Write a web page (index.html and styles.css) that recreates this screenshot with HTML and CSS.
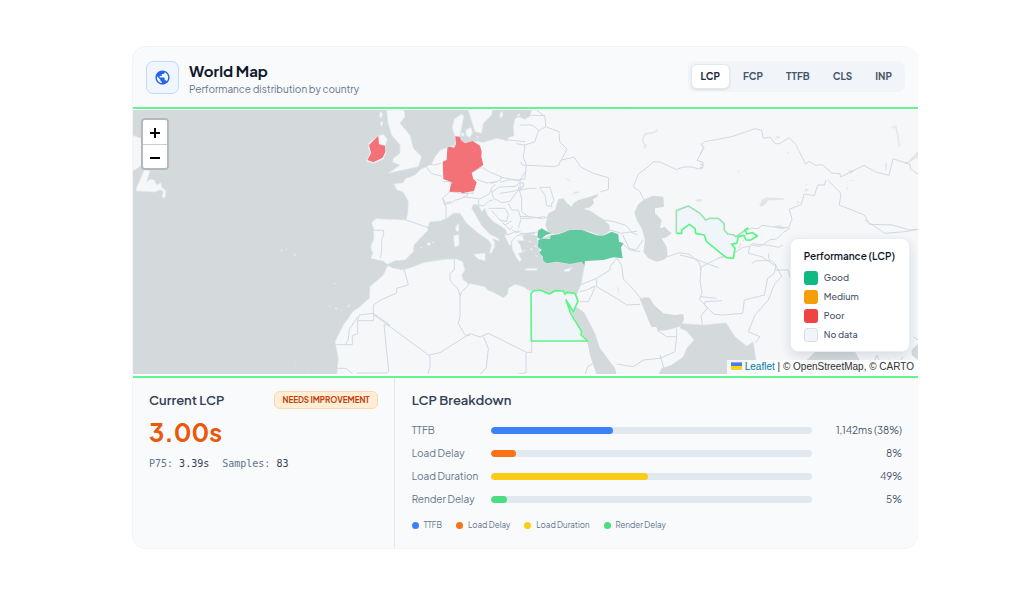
FILE: index.html
```html
<!DOCTYPE html>
<html lang="en">
<head>
<meta charset="utf-8">
<meta name="viewport" content="width=device-width, initial-scale=1">
<title>World Map</title>
<link rel="stylesheet" href="styles.css">
</head>
<body>
<main class="card">
  <header class="head">
    <span class="head-icon">
      <svg viewBox="0 0 24 24" width="17" height="17" aria-hidden="true"><path fill="#2563eb" d="M12 2C6.48 2 2 6.48 2 12s4.480 10 10 10 10-4.480 10-10S17.520 2 12 2zm-1 17.930c-3.950-.49-7-3.850-7-7.930 0-.62.080-1.210.21-1.790L9 15v1c0 1.100.9 2 2 2v1.930zm6.900-2.540c-.26-.81-1-1.390-1.900-1.390h-1v-3c0-.55-.45-1-1-1H8v-2h2c.55 0 1-.45 1-1V7h2c1.100 0 2-.9 2-2v-.41c2.930 1.190 5 4.060 5 7.410 0 2.080-.8 3.970-2.100 5.390z"/></svg>
    </span>
    <div class="head-text">
      <h1>World Map</h1>
      <p>Performance distribution by country</p>
    </div>
    <nav class="tabs" aria-label="Metric">
      <button type="button" class="tab active">LCP</button>
      <button type="button" class="tab">FCP</button>
      <button type="button" class="tab">TTFB</button>
      <button type="button" class="tab">CLS</button>
      <button type="button" class="tab">INP</button>
    </nav>
  </header>

  <section class="map">
    <svg class="map-canvas" viewBox="399 330 2355 792" preserveAspectRatio="xMidYMid slice" role="img" aria-label="Map of countries by LCP">
      <g class="land">
        <path d="M1595 330L1588 350 1575 358 1562 353 1558 340 1545 355 1540 380 1542 407 1525 413 1523 423 1490 415 1450 427 1420 423 1395 430 1383 421 1380 405 1384 388 1388 365 1392 350 1385 342 1362 358 1357 385 1366 412 1366 435 1342 443 1322 449 1305 470 1295 492 1278 501 1263 507 1245 525 1215 537 1210 548 1182 552 1190 569 1210 577 1225 604 1223 640 1218 660 1170 658 1128 656 1115 667 1120 685 1122 715 1112 740 1118 760 1112 775 1135 780 1150 783 1162 793 1185 782 1215 780 1240 755 1242 735 1265 710 1285 690 1282 683 1290 665 1320 663 1340 655 1360 640 1380 640 1400 670 1435 700 1465 720 1475 735 1468 760 1475 758 1484 740 1484 727 1478 715 1498 724 1495 715 1470 703 1445 677 1430 650 1415 625 1420 613 1435 615 1445 635 1455 625 1462 645 1480 665 1505 680 1518 690 1515 710 1528 735 1535 735 1538 750 1548 770 1558 785 1565 780 1555 760 1568 757 1560 735 1552 722 1572 722 1568 708 1585 700 1612 708 1612 720 1617 740 1620 760 1628 775 1640 790 1670 785 1710 792 1750 783 1755 795 1748 825 1745 845 1738 865 1730 885 1725 878 1690 880 1665 872 1648 882 1615 870 1595 873 1585 870 1570 860 1545 853 1525 865 1523 883 1510 893 1480 877 1462 870 1455 860 1405 850 1390 840 1385 825 1395 810 1388 785 1370 777 1335 778 1275 787 1235 802 1210 810 1180 805 1163 797 1150 825 1110 860 1108 895 1080 920 1058 935 1045 955 1030 975 1005 1025 1015 1075 1010 1125H1975L1985 1105 2015 1095 2050 1070 2060 1045 2082 1020 2060 993 2040 985 2040 970 2110 975 2178 968 2205 1010 2240 1038 2260 1025 2268 1080 2275 1125H2760V325z"/>
        <path d="M1160 330H1212L1215 350 1200 370 1230 405 1240 445 1265 470 1255 500 1210 510 1165 520 1200 495 1178 487 1180 475 1200 460 1200 435 1175 405 1165 375z"/>
        <path d="M1135 407L1150 403 1162 418 1155 440 1158 455 1150 478 1120 490 1098 484 1110 460 1105 440 1107 428z"/>
        <path d="M1403 325L1425 395 1445 400 1450 370 1475 345 1478 325z"/>
        <path d="M1398 390L1412 382 1418 397 1410 413 1398 405zM1384 398l8 2 0 9-9-2zM1500 338l8-4 1 15-9 6zM1430 408l6 3-5 4z"/>
        <path d="M1370 675L1376 673 1377 690 1372 696 1366 687zM1360 708L1376 703 1378 735 1364 742z"/>
        <path d="M1420 763L1456 759 1455 783 1435 777zM1577 805h35l-2 6h-32zM1692 810l24-8-8 12-14 1z"/>
        <path d="M1260 741l6 0-1 5zM1280 731l10-4 2 6-7 4zM1297 725l5 1-2 4zM1140 335l8 5-4 16-5-6zM1143 365l6 0-3 14-6-7z"/>
        <path d="M841 751l5-1 1 2-5 1zM857 747l3 0 1 2-4 0zM880 763l6 0 2 3-6 0zM1001 850l5 0 0 2-5 0zM990 916l3 3-1 2zM1006 923l6 2-4 4zM1021 929l3 1-2 3zM1042 920l10-10-6 12zM886 1096l4 1-3 1zM920 1110l3 0-1 2z"/>
        <path d="M395 405L425 415 445 430 450 470 420 500 395 515z"/>
        <path d="M433 510L410 562 408 573 465 576 480 569 490 575 485 590 495 595 498 572 485 562 483 548 470 555 463 540 452 537 440 545 450 512z"/>
        <path d="M1585 722l8 2-2 5zM1590 745l8 3-4 4zM1602 738l6-2 2 6zM1570 748l7 6-5 0zM1607 765l4 2-3 4z"/>
      </g>
      <g class="water">
        <path d="M1636 675L1645 640 1665 630 1675 598 1690 595 1700 608 1715 620 1720 610 1735 600 1760 593 1795 582 1792 590 1778 598 1782 610 1770 622 1750 627 1770 632 1805 655 1828 675 1830 692 1810 707 1790 703 1770 695 1725 690 1700 693 1670 702 1645 700z"/>
        <path d="M1622 716l28-10 3 8-28 6z"/>
        <path d="M1903 637L1915 612 1935 597 1960 587 1990 590 1992 620 1965 625 1965 640 1985 660 1980 685 1995 680 2003 690 2015 700 2000 712 1985 715 2000 740 2003 770 1990 780 1970 785 1945 775 1930 755 1935 720 1925 685 1910 660z"/>
        <path d="M1735 925L1752 937 1785 1000 1800 1045 1845 1105 1850 1125H1790L1770 1065 1763 1030 1745 1000 1725 955 1712 935 1700 905z"/>
        <path d="M1920 898L1932 892 1948 893 1962 915 1990 940 2025 945 2050 942 2052 960 2038 980 2000 991 1975 992 1968 980 1955 982 1945 960z"/>
        <path d="M2415 1085L2445 1055H2565L2585 1090 2600 1125H2405zM2760 1025L2735 1050 2735 1065 2760 1085z"/>
      </g>
      <g class="lake">
        <path d="M2278 615L2285 600 2300 592 2355 595 2350 600 2305 601 2292 617 2282 620z"/>
        <path d="M2705 487L2725 485 2740 468 2758 450V470L2740 480 2720 492z"/>
        <path d="M2655 490l6 0-1 20-4 0zM2542 510l20 2-8 10zM2540 562l6 2-6 6zM2550 543l12-3 0 3zM2390 602l8 4-4 8zM2325 411l15-3-4 9zM2322 415l7-1 0 2zM2360 453l6 4-3 6zM2212 514l8-4-5 8zM2412 570l18-5-12 10zM2415 555l12-3-12 6z"/>
        <path d="M2315 679l25-4 20 10-15 3z"/>
        <path d="M1692 535l14 3 6 8zM1715 584l12-10 14 3zM2083 600l20-3 5 4-12 5zM1850 855l6 12 2 20-4-14z"/>
      </g>
      <g class="lake-line">
        <path d="M2675 383l12-4 6 24 5 38M1972 390l-12 8-25 4-8 20 10 15-6 8"/>
      </g>
      <g class="borders">
        <!-- Western and central Europe -->
        <path d="M1218 660L1285 683M1116 688l10 3h25l0 12-6 15 0 35-4 20M1278 501l18 20 30 8M1280 490l20 5 22-5M1330 545l20 0 2 28-22 20 2 20 22-4 10-8 16-4 22-10 0-18M1330 600l8 20 0 35M1352 575l40 6 30-2M1325 595l15 14 14-6M1422 547l10-8 28 10 30-4 0 0M1415 518l30-16 20 12 40 17-5 10-28 10M1390 590l48 7 30-15 8-20 10-8M1500 531l52 10 22-4 4-25 0-20-8-20 4-28 0-10M1525 420l50 5M1500 547l28-8 30 2M1478 575l20-14 50-2 10-12 14 3-4 14-28 10-40 6M1475 570l5 24 25 14 25-4 14-20 22-25M1436 600l0 15 15 3 14-14 15-5M1465 625l50 0 10 18-5 22-20-5-25-28M1525 610l10 20 20 0 8 28-8 25M1565 655l25 0 45-5M1505 665l10 10 20-12M1516 675l14 15 8-12M1536 690l14 8 12-6M1516 690l4 15 15-5 20-8M1535 735l0-12 16-16 34-5 20-2M1555 560l10 35 0 40 24 18"/>
        <!-- Eastern Europe -->
        <path d="M1560 375l36 0 20 16-12 35-30 9-25-4M1610 330l25 20 2 30-20 12M1637 380l40 15 2 30 22 22-15 30 5 2M1560 485l8 10 95 5 14-5 5-14 40-10 20 30 40 20 44 12-1 35-24 8M1578 512l-18 28 0 30 30-5 20 0M1620 565l15 20 5 32 15 3 0-10M1618 562l32 0 12 40-8 10M1560 650l30-1 40 8M1530 360l40-15 65 2"/>
        <path d="M1632 655l12-5M1558 700l24 0 30-4"/>
        <!-- Russia, Kazakhstan and Mongolia -->
        <path d="M1932 600l-12-25-20-15 15-38 30-22 16-15 20 1 48 23 20-8 30 0 15 6 15-8 0-12-18-6 12-20 8-18-5-10 8-8 45-8 40-8 66-23 20 5 5 24 20-4 15 20 14 0 28-18 20 20 30 60 10-9 20 12 20-2 28 25 25 2 2 10 70-35 35 20 40 10 12-50 52 18 0 12 20 15 40-3 20 5"/>
        <path d="M2478 540l-5 15-20 0-10 32-30-5-10 32-35 14 8 30-10 25-32 0-48-7-12 10-20-2-15 10M2483 540l40 40-5 35 75 30 15 28 70 2 50 15 30-3M2370 685l-20 12-20 20-20 2-30 20-25-4"/>
        <path d="M2100 430l12 12-12 20M2100 492l8 3 0 10-8 2"/>
        <!-- Caucasus and Iran -->
        <path d="M1808 660l30 4 40 12 18 20 15-2M1830 690l35 10 25-4 20 8M1868 705l20 40 20 5 22-30 0 0M1865 730l25 20 30 5M2003 770l35-12 30 5 30 25 5 20-3 35 6 35-8 20 25 25-20 25 4 25M2040 765l40 10 75 28M2115 905l50-3M2100 785l0 0M2155 775l25-5"/>
        <path d="M1740 855l50-20 40-25 0-10 20-24M1790 838l0 22 60 35 30 20 40-2M1850 772l15 25 5 40 20 20 30 35 5 12M1740 875l20-5 25-12M1740 905l25 0 10-20 10-25M1735 840l-8 40"/>
        <path d="M1970 990l30 20 30 0 0-25M2030 1010l-5 45-45 20-50 5-30 20-50-8M1980 1065l12 40M1755 1125l8-25 25-15"/>
        <!-- Central and south Asia -->
        <path d="M2100 810l5-10 60-30 20 0 20-12 22-15 20-4 10-8 50 5 28 6 14-7M2115 905l-2 10 30 28 25 2 60-5 5-40 60-15 10-50 20-15 5-25-22-20 0-15M2250 735l-5 25 40 10 45 30 15 30-20 20-20 50-40 45-20 50 35 15-14 18M2325 810l40 0 10 40 0 20 50 50 40 25M2150 895l-50-5M2215 745l10-15M2215 715l15-5 0 14"/>
        <path d="M2595 660l60 40 60-5 45-8M2620 1095l10-30 14 30 22-15 25 15 18-24M2740 1010l20 14M2310 782l-40 0-15 8"/>
        <!-- North Africa -->
        <path d="M1213 810l12 45-35 10 0 14-50 22-20 14 0 28 160 118 10 8 0 30-8 30-10 6-20 4M1120 940l-42 5-5 17 48 0 0-18M1073 962l0 40-16 4 0 28-52 0M1073 950l-25 38-3 30-8 15M1120 940l50 35-18 0 14 138-6 6-90 0M1288 1065l32-7 90-57 30 10 25-11 115 57 15 0V1015M1363 780l0 30-13 10 0 20 25 30 5 20 0 60-5 20 20 35 15 2 0 0M1380 890l5-15 20-18 0-10M1450 1010l15 35-6 58-20 22M1578 1058l0 60-25 5M1010 1105l28 0 20 17"/>
      </g>
      <path class="poor" d="M1135 407L1137 433 1155 437 1156 455 1148 473 1120 487 1102 480 1113 460 1107 435z"/>
      <path class="poor" d="M1366 409L1380 410 1383 421 1395 430 1418 423 1440 437 1445 455 1444 470 1450 495 1415 518 1420 537 1430 547 1422 573 1400 577 1387 580 1382 576 1348 575 1355 547 1330 537 1328 485 1340 480 1342 443 1350 440 1362 443 1368 433z"/>
      <path class="good" d="M1614 692L1625 685 1645 697 1655 700 1638 705 1622 718 1612 712zM1615 720L1625 716 1650 717 1652 706 1675 703 1710 690 1745 690 1790 706 1810 707 1835 695 1855 703 1857 725 1870 730 1863 742 1868 775 1840 772 1810 780 1755 783 1753 795 1745 785 1710 792 1670 785 1640 790 1630 782 1628 770 1618 758 1625 750 1614 740z"/>
      <path class="nodata" d="M1593 880L1600 873 1620 870 1648 882 1665 872 1690 873 1695 883 1700 877 1725 880 1734 903 1720 935 1698 900 1712 940 1745 995 1743 1005 1763 1023H1594z"/>
      <path class="nodata-fill" d="M2029 700V632L2065 618 2100 640 2117 660 2130 655 2155 655 2172 670 2173 690 2183 702 2202 705 2208 710 2245 684 2237 698 2247 700 2272 708 2250 722 2215 720 2210 732 2195 735 2205 745 2200 775 2180 775 2160 758 2120 725 2113 705 2087 700 2085 685 2068 673 2045 690 2045 700z"/>
      <path class="nodata-soft" d="M2029 700V632L2065 618 2100 640 2117 660 2130 655 2155 655 2172 670 2173 690 2183 702 2202 705 2208 710 2245 684"/>
      <path class="nodata-line" d="M2245 684L2235 690 2240 702 2258 698 2272 708 2252 720 2238 720 2232 706 2215 710 2210 730 2195 732 2205 745 2200 775 2180 773 2160 758 2120 725 2113 705 2087 700 2085 685 2068 673 2045 690 2045 700H2029"/>
    </svg>

    <div class="zoom">
      <button type="button" aria-label="Zoom in"><svg viewBox="0 0 12 12" width="12" height="12" aria-hidden="true"><path d="M6 1v10M1 6h10"/></svg></button>
      <button type="button" aria-label="Zoom out"><svg viewBox="0 0 12 12" width="12" height="12" aria-hidden="true"><path d="M1 6h10"/></svg></button>
    </div>

    <aside class="legend">
      <h2>Performance (LCP)</h2>
      <ul>
        <li><i class="swatch sw-good"></i>Good</li>
        <li><i class="swatch sw-medium"></i>Medium</li>
        <li><i class="swatch sw-poor"></i>Poor</li>
        <li><i class="swatch sw-none"></i>No data</li>
      </ul>
    </aside>

    <div class="credit">
      <svg viewBox="0 0 12 8" width="11" height="8" aria-hidden="true"><path fill="#4c7be1" d="M0 0h12v4H0z"/><path fill="#ffd500" d="M0 4h12v3H0z"/><path fill="#e0bc00" d="M0 7h12v1H0z"/></svg>
      <a href="#">Leaflet</a> | © OpenStreetMap, © CARTO
    </div>
  </section>

  <div class="stats">
    <section class="current">
      <div class="current-head">
        <h2>Current LCP</h2>
        <span class="badge">NEEDS IMPROVEMENT</span>
      </div>
      <p class="value">3.00s</p>
      <p class="facts"><span>P75: <b>3.39s</b></span><span>Samples: <b>83</b></span></p>
    </section>
    <section class="breakdown">
      <h2>LCP Breakdown</h2>
      <div class="rows">
        <div class="row"><span>TTFB</span><div class="bar"><div class="fill blue" style="width:38%"></div></div><span class="num">1,142ms (38%)</span></div>
        <div class="row"><span>Load Delay</span><div class="bar"><div class="fill orange" style="width:8%"></div></div><span class="num">8%</span></div>
        <div class="row"><span>Load Duration</span><div class="bar"><div class="fill yellow" style="width:49%"></div></div><span class="num">49%</span></div>
        <div class="row"><span>Render Delay</span><div class="bar"><div class="fill green" style="width:5%"></div></div><span class="num">5%</span></div>
      </div>
      <ul class="keys">
        <li><i class="dot blue"></i>TTFB</li>
        <li><i class="dot orange"></i>Load Delay</li>
        <li><i class="dot yellow"></i>Load Duration</li>
        <li><i class="dot green"></i>Render Delay</li>
      </ul>
    </section>
  </div>
</main>
</body>
</html>
```

FILE: styles.css
```css
* { box-sizing: border-box; }

body {
  margin: 0;
  padding: 46px 114px 44px 132px;
  background: #fff;
  color: #334155;
  font-family: "Plus Jakarta Sans", Inter, "Liberation Sans", sans-serif;
  font-size: 10px;
  line-height: 16px;
}

h1, h2, p, ul { margin: 0; padding: 0; }
ul { list-style: none; }
button { font: inherit; cursor: pointer; }

.card {
  overflow: hidden;
  border: 1px solid #f1f5f9;
  border-right: 0;
  border-radius: 14px;
  background: #f8fafc;
}

.head {
  display: flex;
  align-items: flex-start;
  gap: 10px;
  padding: 14px 13px 10px;
}
.head-icon {
  display: grid;
  place-items: center;
  width: 33px;
  height: 33px;
  border: 1px solid #bfdbfe;
  border-radius: 7px;
  background: #eff6ff;
}
.head-text { flex: 1; }
h1 {
  color: #0f172a;
  font-size: 15px;
  font-weight: 700;
  line-height: 20px;
}
.head-text p { color: #64748b; font-size: 10px; line-height: 16px; }

.tabs {
  display: flex;
  gap: 3px;
  padding: 3px;
  border-radius: 7px;
  background: #f1f5f9;
}
.tab {
  padding: 4px 9px;
  border: 1px solid transparent;
  border-radius: 6px;
  background: none;
  color: #475569;
  font-size: 10px;
  font-weight: 700;
  line-height: 15px;
}
.tab.active {
  border-color: #e2e8f0;
  background: #fff;
  box-shadow: 0 1px 2px rgba(15, 23, 42, .1);
  color: #1e293b;
}

.map {
  position: relative;
  height: 271px;
  border-top: 2px solid #62f58e;
  border-bottom: 2px solid #62f58e;
  padding: 1px 0 2px;
  background: #fff;
}
.map-canvas { display: block; width: 100%; height: 100%; background: #d4dadc; }
.land { fill: #f5f7f9; stroke: #dfe7ef; stroke-width: 2; }
.water { fill: #d4dadc; }
.lake { fill: #e1e6e8; }
.lake-line { fill: none; stroke: #e4e8eb; stroke-width: 5; }
.borders { fill: none; stroke: #d2d8e3; stroke-width: 3; stroke-linejoin: round; }
.poor { fill: #f37278; }
.good { fill: #60c9a0; }
.nodata { fill: #f0f5f9; stroke: #5cf585; stroke-width: 5; stroke-linejoin: round; }
.nodata-fill { fill: #f0f5f9; }
.nodata-soft { fill: none; stroke: #9ce3b4; stroke-width: 5; }
.nodata-line { fill: none; stroke: #5cf585; stroke-width: 5; stroke-linejoin: round; }

.zoom {
  position: absolute;
  top: 9px;
  left: 8px;
  overflow: hidden;
  border: 2px solid #b4b9bb;
  border-radius: 4px;
}
.zoom button {
  display: grid;
  place-items: center;
  width: 24px;
  height: 24px;
  padding: 2px 0 0;
  border: 0;
  background: #fff;
}
.zoom button + button { border-top: 1px solid #ccc; }
.zoom path { fill: none; stroke: #000; stroke-width: 2; }

.legend {
  position: absolute;
  right: 8px;
  bottom: 24px;
  padding: 9px 14px 9px 13px;
  border: 1px solid #e9eef4;
  border-radius: 8px;
  background: #fff;
  box-shadow: 0 4px 12px rgba(15, 23, 42, .12);
}
.legend h2 {
  margin-bottom: 7px;
  color: #0f172a;
  font-size: 10px;
  font-weight: 600;
  line-height: 16px;
}
.legend ul { display: grid; gap: 5px; }
.legend li {
  display: flex;
  align-items: center;
  gap: 6px;
  color: #475569;
  font-size: 9px;
  font-weight: 500;
  line-height: 14px;
}
.swatch { width: 14px; height: 14px; border-radius: 3px; }
.sw-good { background: #10b981; }
.sw-medium { background: #f59e0b; }
.sw-poor { background: #ef4444; }
.sw-none { border: 1px solid #d5dfe9; background: #f1f5f9; }

.credit {
  position: absolute;
  right: 0;
  bottom: 2px;
  padding: 0 4px;
  background: rgba(255, 255, 255, .8);
  color: #333;
  font: 10px/14px "Liberation Sans", Arial, sans-serif;
}
.credit a { color: #0078a8; text-decoration: none; }

.stats { display: grid; grid-template-columns: 1fr 2fr; }
.stats h2 { color: #334155; font-size: 13px; font-weight: 600; line-height: 18px; }

.current { padding: 13px 16px; border-right: 1px solid #e2e8f0; }
.current-head { display: flex; align-items: center; justify-content: space-between; }
.badge {
  padding: 0 7px;
  border: 1px solid #fed7aa;
  border-radius: 6px;
  background: #ffedd5;
  color: #c2410c;
  font-size: 8px;
  font-weight: 700;
  line-height: 16px;
}
.value {
  margin-top: 6px;
  color: #ea580c;
  font-size: 25px;
  font-weight: 700;
  line-height: 34px;
}
.facts {
  display: flex;
  gap: 13px;
  margin-top: 7px;
  color: #64748b;
  font: 10px/16px "DejaVu Sans Mono", monospace;
}
.facts b { color: #334155; font-weight: 400; }

.breakdown { padding: 13px 16px 15px 17px; }
.rows { display: grid; gap: 7px; margin-top: 13px; }
.row {
  display: grid;
  grid-template-columns: 79px 1fr 90px;
  align-items: center;
  color: #64748b;
}
.num { color: #475569; text-align: right; }
.bar { height: 7px; overflow: hidden; border-radius: 4px; background: #e2e8f0; }
.fill { height: 7px; border-radius: 4px; }
.blue { background: #3b82f6; }
.orange { background: #f97316; }
.yellow { background: #facc15; }
.green { background: #4ade80; }

.keys { display: flex; gap: 14px; margin-top: 10px; }
.keys li {
  display: flex;
  align-items: center;
  gap: 5px;
  color: #64748b;
  font-size: 8px;
}
.dot { width: 7px; height: 7px; border-radius: 50%; }
```
